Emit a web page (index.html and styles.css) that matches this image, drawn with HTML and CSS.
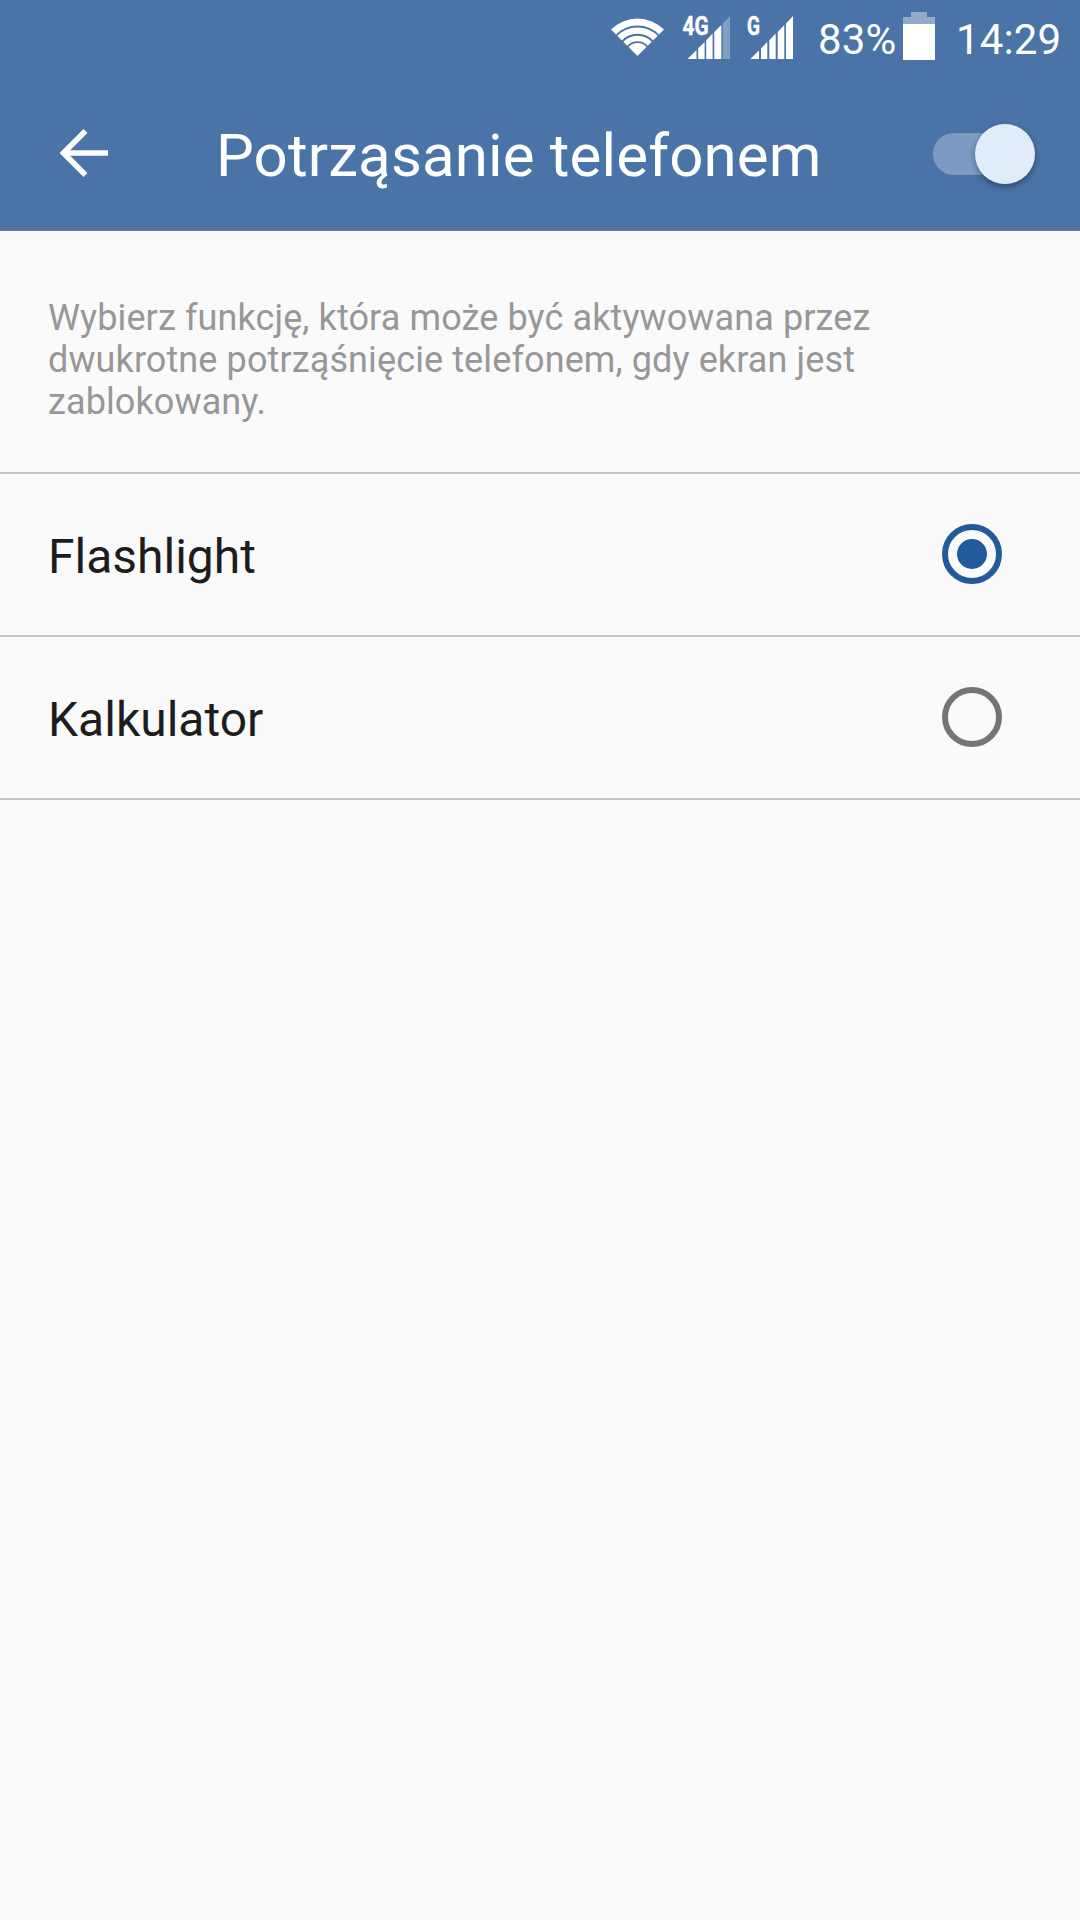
FILE: index.html
```html
<!DOCTYPE html>
<html lang="pl">
<head>
<meta charset="utf-8">
<title>Potrząsanie telefonem</title>
<link rel="stylesheet" href="styles.css">
</head>
<body>
<header class="header">
  <div class="status">
    <svg class="wifi" width="54" height="40" viewBox="0 0 54 40">
      <path class="fill" d="M0 12.500A37.500 37.500 0 0 1 53 12.500L26.500 39Z"/>
      <path class="gap" d="M5 18.800A29.500 29.500 0 0 1 48 18.800M11 24.600A21 21 0 0 1 42 24.600M16 30.500A13 13 0 0 1 37 30.500"/>
    </svg>
    <svg class="signal signal-lte" width="48" height="46" viewBox="0 -2 48 46">
      <path class="dim" d="M39.700 7.500L47 0V43H39.700Z"/>
      <path class="fill" d="M4.500 43L13.500 34V43ZM15.200 32.300L21.600 26V43H15.200ZM23.200 24.300L29.600 17.600V43H23.200ZM31.300 16L38.300 9V43H31.300Z"/>
      <text x="-0.500" y="19.300" textLength="26" lengthAdjust="spacingAndGlyphs">4G</text>
    </svg>
    <svg class="signal signal-gsm" width="48" height="46" viewBox="0 -2 48 46">
      <path class="fill" d="M3.300 43L12 34.500V43ZM14 32.500L20.300 26V43H14ZM22.300 24.300L28.700 17.600V43H22.300ZM30.700 16L37.300 9V43H30.700ZM39 7.500L46 0V43H39Z"/>
      <text x="0" y="19.300" textLength="13" lengthAdjust="spacingAndGlyphs">G</text>
    </svg>
    <span class="percent">83%</span>
    <svg class="battery" width="32" height="48" viewBox="0 0 32 48">
      <path class="level-empty" d="M8 0H24V5H32V12H0V5H8Z"/>
      <path class="fill" d="M0 12H32V48H0Z"/>
    </svg>
    <span class="time">14:29</span>
  </div>
  <div class="toolbar">
    <svg class="back" width="48" height="48" viewBox="0 0 48 48">
      <path d="M48 24H4M25.500 2L3.500 24L25.500 46"/>
    </svg>
    <h1 class="title">Potrząsanie telefonem</h1>
    <div class="switch"><div class="thumb"></div></div>
  </div>
</header>
<main>
  <p class="description">Wybierz funkcję, która może być aktywowana przez dwukrotne potrząśnięcie telefonem, gdy ekran jest zablokowany.</p>
  <div class="option"><span class="label">Flashlight</span><span class="radio checked"></span></div>
  <div class="option"><span class="label">Kalkulator</span><span class="radio"></span></div>
</main>
</body>
</html>
```
FILE: styles.css
```css
* { box-sizing: border-box; }
body {
  margin: 0;
  min-height: 1920px;
  background: #fafafa;
  font-family: Roboto, sans-serif;
}
.header {
  height: 231px;
  background: #4a73a7;
  border-bottom: 2px solid #5b7493;
  color: #fff;
}
.status {
  height: 72px;
  display: flex;
  align-items: flex-start;
  padding-left: 611px;
}
.status svg { flex: none; }
.fill { fill: #fff; }
.gap { fill: none; stroke: #4a73a7; stroke-width: 1.8; }
.dim { fill: #809dc2; }
.level-empty { fill: #92abca; }
.wifi { margin-top: 17px; }
.signal { margin-top: 14px; overflow: visible; }
.signal text { font-size: 25px; font-weight: 700; fill: #fff; stroke: #fff; stroke-width: .5; }
.signal-lte { margin-left: 18px; }
.signal-gsm { margin-left: 16px; }
.percent, .time { font-size: 42px; line-height: 50px; margin-top: 15px; }
.percent { width: 85px; margin-left: 23px; letter-spacing: .1px; }
.battery { margin-top: 12px; }
.time { margin-left: 21px; letter-spacing: .1px; }
.toolbar {
  height: 157px;
  display: flex;
  align-items: flex-start;
  padding-left: 60px;
}
.back { flex: none; margin-top: 57px; }
.back path { fill: none; stroke: #fff; stroke-width: 5.5; }
.title {
  width: 716px;
  margin: 49px 0 0 108px;
  font-size: 60px;
  line-height: 70px;
  font-weight: 400;
  letter-spacing: .14px;
}
.switch {
  display: flex;
  align-items: center;
  justify-content: flex-end;
  width: 102px;
  height: 42px;
  margin-top: 60.5px;
  margin-left: .5px;
  border-radius: 21px;
  background: linear-gradient(#7d9ac3, #7d9ac3) left / 80px 42px no-repeat;
}
.thumb {
  flex: none;
  width: 60px;
  height: 60px;
  border-radius: 50%;
  background: #e1ecf8;
  box-shadow: 0 3px 6px rgba(0, 0, 0, .35);
}
.description {
  height: 243px;
  margin: 0;
  padding: 66px 180px 0 48px;
  border-bottom: 2px solid #c5c5c5;
  color: #979797;
  font-size: 36px;
  line-height: 42px;
  letter-spacing: .11px;
}
.option {
  display: flex;
  align-items: center;
  justify-content: space-between;
  height: 163px;
  padding: 0 78px 1px 48px;
  border-bottom: 2px solid #c5c5c5;
}
.label {
  padding-top: 5px;
  color: #1d1d1d;
  font-size: 48px;
  line-height: 56px;
}
.radio {
  display: grid;
  place-items: center;
  width: 60px;
  height: 60px;
  border: 6px solid #757575;
  border-radius: 50%;
}
.radio.checked { border-color: #225a9c; }
.radio.checked::before {
  content: "";
  width: 30px;
  height: 30px;
  border-radius: 50%;
  background: #225a9c;
}
```
